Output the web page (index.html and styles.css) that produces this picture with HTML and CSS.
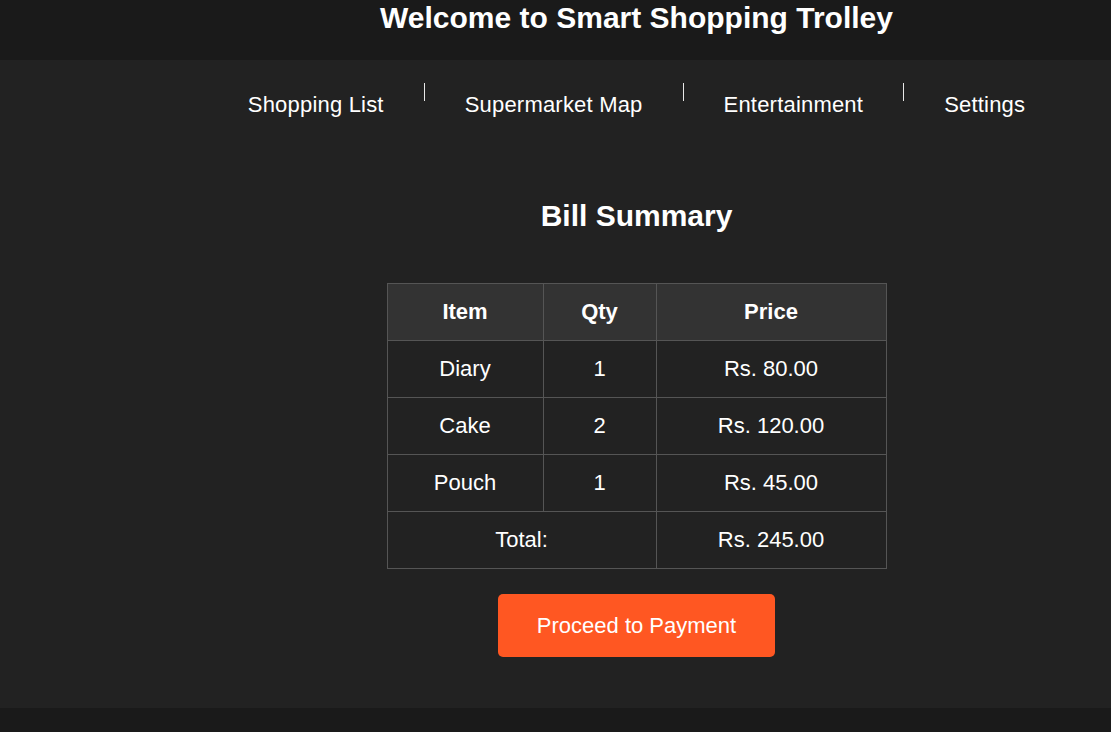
FILE: index.html
```html
<!DOCTYPE html>
<html lang="en">
<head>
<meta charset="utf-8">
<title>Smart Shopping Trolley</title>
<link rel="stylesheet" href="styles.css">
</head>
<body>
<header class="site-header">
  <h1 class="site-title">Welcome to Smart Shopping Trolley</h1>
</header>
<main class="main">
  <nav class="nav">
    <ul class="nav-list">
      <li class="nav-item"><a href="#">Shopping List</a></li>
      <li class="nav-sep" aria-hidden="true"></li>
      <li class="nav-item"><a href="#">Supermarket Map</a></li>
      <li class="nav-sep" aria-hidden="true"></li>
      <li class="nav-item"><a href="#">Entertainment</a></li>
      <li class="nav-sep" aria-hidden="true"></li>
      <li class="nav-item"><a href="#">Settings</a></li>
    </ul>
  </nav>
  <section class="bill">
    <h2 class="bill-title">Bill Summary</h2>
    <table class="bill-table">
      <colgroup>
        <col class="col-item">
        <col class="col-qty">
        <col class="col-price">
      </colgroup>
      <thead>
        <tr><th>Item</th><th>Qty</th><th>Price</th></tr>
      </thead>
      <tbody>
        <tr><td>Diary</td><td>1</td><td>Rs. 80.00</td></tr>
        <tr><td>Cake</td><td>2</td><td>Rs. 120.00</td></tr>
        <tr><td>Pouch</td><td>1</td><td>Rs. 45.00</td></tr>
        <tr><td colspan="2">Total:</td><td>Rs. 245.00</td></tr>
      </tbody>
    </table>
    <button class="pay-btn" type="button">Proceed to Payment</button>
  </section>
</main>
<footer class="site-footer"></footer>
</body>
</html>
```

FILE: styles.css
```css
* { box-sizing: border-box; }

html, body {
  margin: 0;
  padding: 0;
  background: #1a1a1a;
  color: #ffffff;
  font-family: "Liberation Sans", Arial, sans-serif;
  font-size: 22px;
}

.site-header {
  background: #1a1a1a;
  height: 60px;
  padding: 1px 0 0 162px;
}

.site-title {
  margin: 0;
  font-size: 30px;
  line-height: 34px;
  font-weight: bold;
  text-align: center;
}

.main {
  background: #222222;
  padding-left: 162px;
}

.nav {
  padding-top: 23px;
}

.nav-list {
  list-style: none;
  margin: 0;
  padding: 0;
  display: flex;
  justify-content: center;
  align-items: flex-start;
  gap: 40px;
}

.nav-item {
  padding-top: 9px;
}

.nav-item a {
  color: #ffffff;
  text-decoration: none;
  line-height: 25px;
  letter-spacing: 0.2px;
  display: block;
}

.nav-sep {
  width: 1px;
  height: 18px;
  background: #e8e8e8;
}

.bill {
  display: flex;
  flex-direction: column;
  align-items: center;
  padding-bottom: 51px;
}

.bill-title {
  margin: 81px 0 50px;
  font-size: 30px;
  line-height: 35px;
  font-weight: bold;
}

.bill-table {
  border-collapse: collapse;
  table-layout: fixed;
  width: 499px;
  border: 1px solid #555555;
}

.col-item { width: 156px; }
.col-qty { width: 113px; }
.col-price { width: 230px; }

.bill-table th,
.bill-table td {
  border: 1px solid #555555;
  text-align: center;
  line-height: 25px;
  padding: 15px 0 16px;
  font-size: 22px;
}

.bill-table th {
  background: #333333;
  font-weight: bold;
}

.pay-btn {
  margin-top: 25px;
  background: #ff5722;
  color: #ffffff;
  border: none;
  border-radius: 5px;
  font-family: "Liberation Sans", Arial, sans-serif;
  font-size: 22px;
  line-height: 25px;
  padding: 19px 36px;
  width: 277px;
  cursor: pointer;
}

.site-footer {
  background: #1a1a1a;
  height: 24px;
}
```
